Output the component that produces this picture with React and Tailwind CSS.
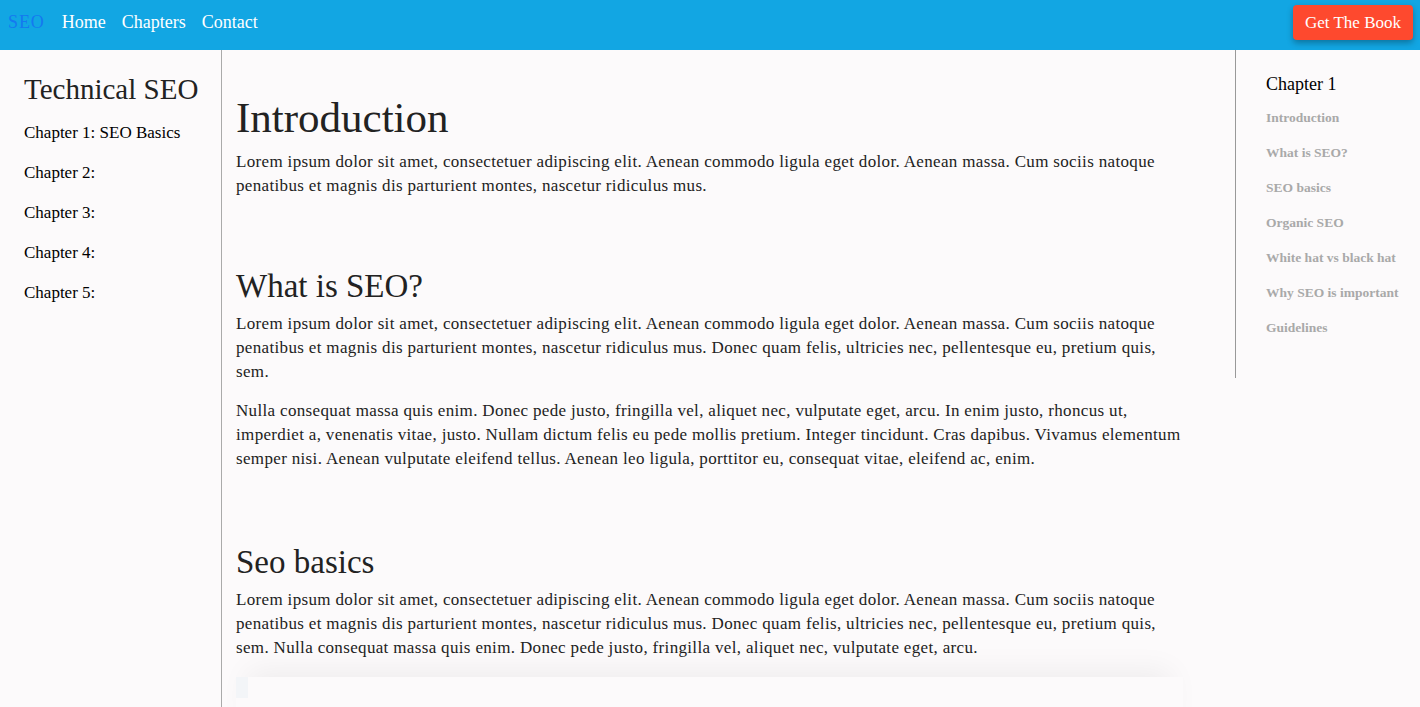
import React from 'react';

const serif = { fontFamily: '"Liberation Serif", "DejaVu Serif", serif' };

const leftLinks = ['Chapter 1: SEO Basics', 'Chapter 2:', 'Chapter 3:', 'Chapter 4:', 'Chapter 5:'];
const tocLinks = ['Introduction', 'What is SEO?', 'SEO basics', 'Organic SEO', 'White hat vs black hat', 'Why SEO is important', 'Guidelines'];

const Para = ({ children, className = '' }) => (
    <p className={`text-[17px] leading-6 tracking-[0.02em] text-[#222] ${className}`}>{children}</p>
);

const App = () => {
    return (
        <div className="min-h-screen bg-[#fcfafb] overflow-hidden" style={serif}>
            {/* Top bar */}
            <nav className="h-[50px] bg-[#12a6e3] flex items-center justify-between pl-2 pr-[7px]">
                <div className="flex items-center gap-4 text-[18px] -mt-[6px]">
                    <span className="text-[#1479f0] tracking-[0.05em] mr-[1px]">SEO</span>
                    <span className="text-white">Home</span>
                    <span className="text-white">Chapters</span>
                    <span className="text-white">Contact</span>
                </div>
                <button className="h-[35px] w-[120px] -mt-[5px] rounded bg-[#fe492e] text-white text-[17px] shadow-[0_3px_6px_rgba(0,0,0,0.3)]">
                    Get The Book
                </button>
            </nav>

            <div className="flex">
                {/* Left sidebar */}
                <aside className="w-[222px] shrink-0 border-r border-[#aaa] pl-6 pt-[21px] min-h-[657px]">
                    <h2 className="text-[29px] text-[#222] leading-9">Technical SEO</h2>
                    <ul className="mt-[14px] flex flex-col gap-[16px]">
                        {leftLinks.map((l) => (
                            <li key={l} className="text-[17px] leading-6 text-black">{l}</li>
                        ))}
                    </ul>
                </aside>

                {/* Main content */}
                <main className="flex-1 pl-[14px] pr-[52px] pt-[44px]">
                    <section>
                        <h1 className="text-[43px] leading-[48px] text-[#222] mb-[8px]">Introduction</h1>
                        <Para>
                            Lorem ipsum dolor sit amet, consectetuer adipiscing elit. Aenean commodo ligula eget dolor. Aenean massa. Cum sociis natoque
                            penatibus et magnis dis parturient montes, nascetur ridiculus mus.
                        </Para>
                    </section>

                    <section className="mt-[68px]">
                        <h2 className="text-[33px] leading-10 text-[#222] mb-[6px]">What is SEO?</h2>
                        <Para>
                            Lorem ipsum dolor sit amet, consectetuer adipiscing elit. Aenean commodo ligula eget dolor. Aenean massa. Cum sociis natoque
                            penatibus et magnis dis parturient montes, nascetur ridiculus mus. Donec quam felis, ultricies nec, pellentesque eu, pretium quis,
                            sem.
                        </Para>
                        <Para className="mt-[15px]">
                            Nulla consequat massa quis enim. Donec pede justo, fringilla vel, aliquet nec, vulputate eget, arcu. In enim justo, rhoncus ut,
                            imperdiet a, venenatis vitae, justo. Nullam dictum felis eu pede mollis pretium. Integer tincidunt. Cras dapibus. Vivamus elementum
                            semper nisi. Aenean vulputate eleifend tellus. Aenean leo ligula, porttitor eu, consequat vitae, eleifend ac, enim.
                        </Para>
                    </section>

                    <section className="mt-[71px]">
                        <h2 className="text-[33px] leading-10 text-[#222] mb-[6px]">Seo basics</h2>
                        <Para>
                            Lorem ipsum dolor sit amet, consectetuer adipiscing elit. Aenean commodo ligula eget dolor. Aenean massa. Cum sociis natoque
                            penatibus et magnis dis parturient montes, nascetur ridiculus mus. Donec quam felis, ultricies nec, pellentesque eu, pretium quis,
                            sem. Nulla consequat massa quis enim. Donec pede justo, fringilla vel, aliquet nec, vulputate eget, arcu.
                        </Para>
                    </section>

                    <section className="mt-[17px] pt-[26px] relative shadow-[0_-18px_30px_-12px_rgba(0,0,0,0.06)]">
                        <div className="absolute left-0 top-0 w-[12px] h-[21px] bg-[#f3f5f8]" />
                        <Para>
                            Integer tincidunt. Cras dapibus. Vivamus elementum semper nisi. Nullam dictum felis eu pede mollis pretium. Integer tincidunt. Cras
                            dapibus. Vivamus elementum semper nisi.
                        </Para>
                    </section>
                </main>

                {/* Right table of contents */}
                <aside className="w-[185px] shrink-0 self-start border-l border-[#999] pl-[30px] pt-[22px] h-[328px]">
                    <h3 className="text-[18px] leading-6 text-black">Chapter 1</h3>
                    <ul className="mt-[13px] flex flex-col gap-[17px]">
                        {tocLinks.map((l) => (
                            <li key={l} className="text-[13.5px] leading-[18px] font-bold text-[#a9a9a9]">{l}</li>
                        ))}
                    </ul>
                </aside>
            </div>
        </div>
    );
};

export default App;
